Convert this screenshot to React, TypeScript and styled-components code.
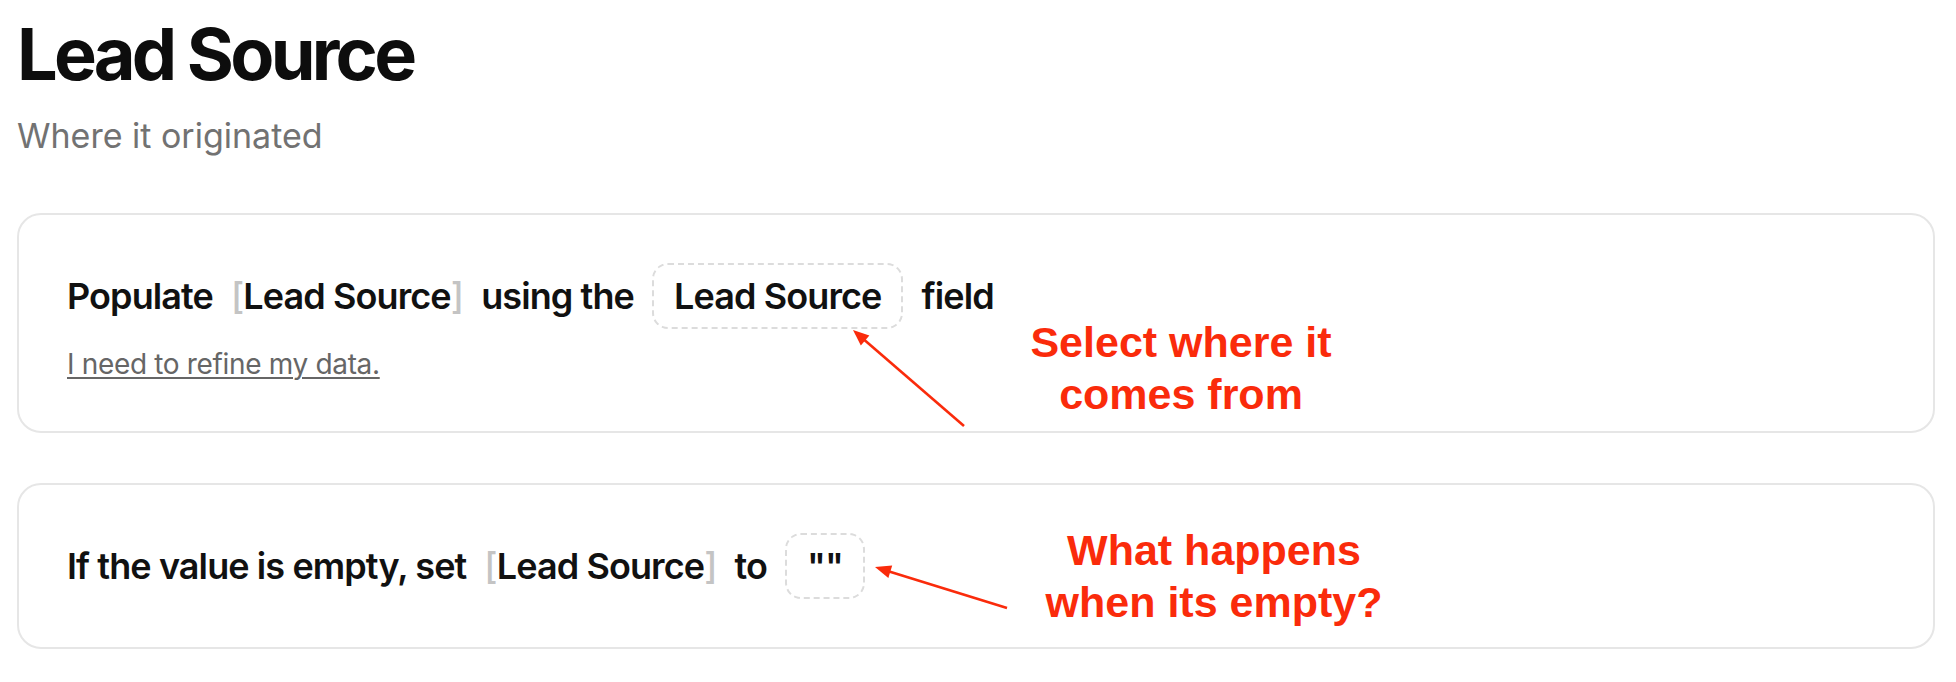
import styled, { createGlobalStyle } from "styled-components";

const GlobalStyle = createGlobalStyle`
  html, body {
    margin: 0;
    padding: 0;
    background: #ffffff;
  }
  body {
    font-family: Inter, "Noto Sans", sans-serif;
    color: #111111;
  }
`;

const Page = styled.div`
  position: relative;
  min-height: 682px;
  padding: 18px 21px 0 17px;
  box-sizing: border-box;
`;

const Title = styled.h1`
  margin: 0;
  font-size: 72px;
  line-height: 72px;
  font-weight: 700;
  letter-spacing: -0.052em;
  color: #0d0d0d;
`;

const Subtitle = styled.div`
  margin-top: 25px;
  font-size: 34px;
  font-weight: 400;
  color: #727272;
`;

const CardList = styled.div`
  display: flex;
  flex-direction: column;
  gap: 50px;
  margin-top: 57px;
`;

const Card = styled.div`
  border: 2px solid #e6e6e6;
  border-radius: 24px;
  padding: 48px;
`;

const Sentence = styled.div`
  display: flex;
  align-items: center;
  gap: 18px;
  font-size: 36px;
  font-weight: 600;
  letter-spacing: -0.025em;
  color: #111111;
  white-space: nowrap;
`;

const FieldRef = styled.span``;

const Bracket = styled.span`
  color: #c4c4c4;
  font-weight: 500;
`;

const Chip = styled.span`
  display: inline-flex;
  align-items: center;
  height: 66px;
  box-sizing: border-box;
  padding: 0 20px;
  border: 2px dashed #dcdcdc;
  border-radius: 16px;
`;

const RefineLink = styled.a`
  display: inline-block;
  margin-top: 16px;
  font-size: 28px;
  line-height: 38px;
  letter-spacing: -0.012em;
  color: #666666;
  text-decoration: underline;
  text-underline-offset: 3px;
  text-decoration-thickness: 2px;
`;

const Callout = styled.div<{ $left: number; $top: number }>`
  position: absolute;
  left: ${(p) => p.$left}px;
  top: ${(p) => p.$top}px;
  width: 420px;
  text-align: center;
  font-family: "Liberation Sans", Arial, sans-serif;
  font-weight: 700;
  font-size: 43px;
  line-height: 52px;
  color: #fa2b0b;
`;

const Overlay = styled.svg`
  position: absolute;
  left: 0;
  top: 0;
  pointer-events: none;
`;

function Arrow(props: { from: [number, number]; to: [number, number] }) {
  const [x1, y1] = props.from;
  const [x2, y2] = props.to;
  const len = Math.hypot(x2 - x1, y2 - y1);
  const ux = (x2 - x1) / len;
  const uy = (y2 - y1) / len;
  const headLen = 16;
  const half = 6.5;
  const bx = x2 - ux * headLen;
  const by = y2 - uy * headLen;
  const px = -uy;
  const py = ux;
  const head = `${x2},${y2} ${bx + px * half},${by + py * half} ${bx - px * half},${by - py * half}`;
  return (
    <g>
      <line x1={x1} y1={y1} x2={bx + ux * 2} y2={by + uy * 2} stroke="#fa2b0b" strokeWidth={2.6} />
      <polygon points={head} fill="#fa2b0b" />
    </g>
  );
}

export default function App() {
  return (
    <Page>
      <GlobalStyle />
      <Title>Lead Source</Title>
      <Subtitle>Where it originated</Subtitle>
      <CardList>
        <Card>
          <Sentence>
            <span>Populate</span>
            <FieldRef>
              <Bracket>[</Bracket>Lead Source<Bracket>]</Bracket>
            </FieldRef>
            <span>using the</span>
            <Chip>Lead Source</Chip>
            <span>field</span>
          </Sentence>
          <RefineLink>I need to refine my data.</RefineLink>
        </Card>
        <Card>
          <Sentence>
            <span>If the value is empty, set</span>
            <FieldRef>
              <Bracket>[</Bracket>Lead Source<Bracket>]</Bracket>
            </FieldRef>
            <span>to</span>
            <Chip>""</Chip>
          </Sentence>
        </Card>
      </CardList>

      <Callout $left={971} $top={316}>
        Select where it
        <br />
        comes from
      </Callout>
      <Callout $left={1004} $top={524}>
        What happens
        <br />
        when its empty?
      </Callout>
      <Overlay width={1956} height={682}>
        <Arrow from={[964, 426]} to={[853, 330]} />
        <Arrow from={[1007, 608]} to={[875, 567]} />
      </Overlay>
    </Page>
  );
}
